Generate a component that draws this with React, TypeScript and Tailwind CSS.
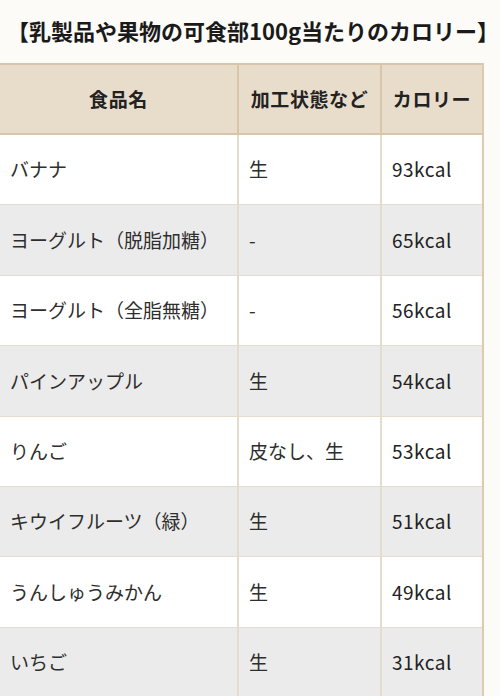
const rows = [
  { name: "バナナ", state: "生", kcal: "93kcal" },
  { name: "ヨーグルト（脱脂加糖）", state: "-", kcal: "65kcal" },
  { name: "ヨーグルト（全脂無糖）", state: "-", kcal: "56kcal" },
  { name: "パインアップル", state: "生", kcal: "54kcal" },
  { name: "りんご", state: "皮なし、生", kcal: "53kcal" },
  { name: "キウイフルーツ（緑）", state: "生", kcal: "51kcal" },
  { name: "うんしゅうみかん", state: "生", kcal: "49kcal" },
  { name: "いちご", state: "生", kcal: "31kcal" },
];

const font = {
  fontFamily: '"Noto Sans CJK JP", "Noto Sans", sans-serif',
};

export default function App() {
  return (
    <div className="min-h-[696px] w-[500px] overflow-hidden bg-[#fcfbf8]" style={font}>
      <h2 className="pl-[7px] pt-[15px] text-[22px] font-bold leading-[30px] text-[#1a1a1a] whitespace-nowrap">
        【乳製品や果物の可食部100g当たりのカロリー】
      </h2>

      <div className="mt-[18px] w-[484px] border-r-2 border-[#ddcbb0]">
        {/* header */}
        <div className="flex h-[72px] border-y-2 border-[#d9c6aa] bg-[#e8dccb] text-[19px] font-bold tracking-[0.6px] text-[#222]">
          <div className="flex w-[239px] items-center justify-center border-r-2 border-[#d9c6aa]">食品名</div>
          <div className="flex w-[143px] items-center justify-center border-r-2 border-[#d9c6aa]">加工状態など</div>
          <div className="flex flex-1 items-center justify-center">カロリー</div>
        </div>

        {rows.map((r, i) => (
          <div
            key={i}
            className={
              "flex h-[70.4px] border-b border-[#e6dccd] text-[19px] text-[#2e2e2e] " +
              (i % 2 === 1 ? "bg-[#ebebeb]" : "bg-white")
            }
          >
            <div className="flex w-[239px] items-center border-r-2 border-[#e6dccd] pl-[10px] whitespace-nowrap">
              {r.name}
            </div>
            <div className="flex w-[143px] items-center border-r-2 border-[#e6dccd] pl-[10px] whitespace-nowrap">
              {r.state}
            </div>
            <div className="flex flex-1 items-center pl-[10px] tracking-[0.5px] text-[#222]">{r.kcal}</div>
          </div>
        ))}
      </div>
    </div>
  );
}
